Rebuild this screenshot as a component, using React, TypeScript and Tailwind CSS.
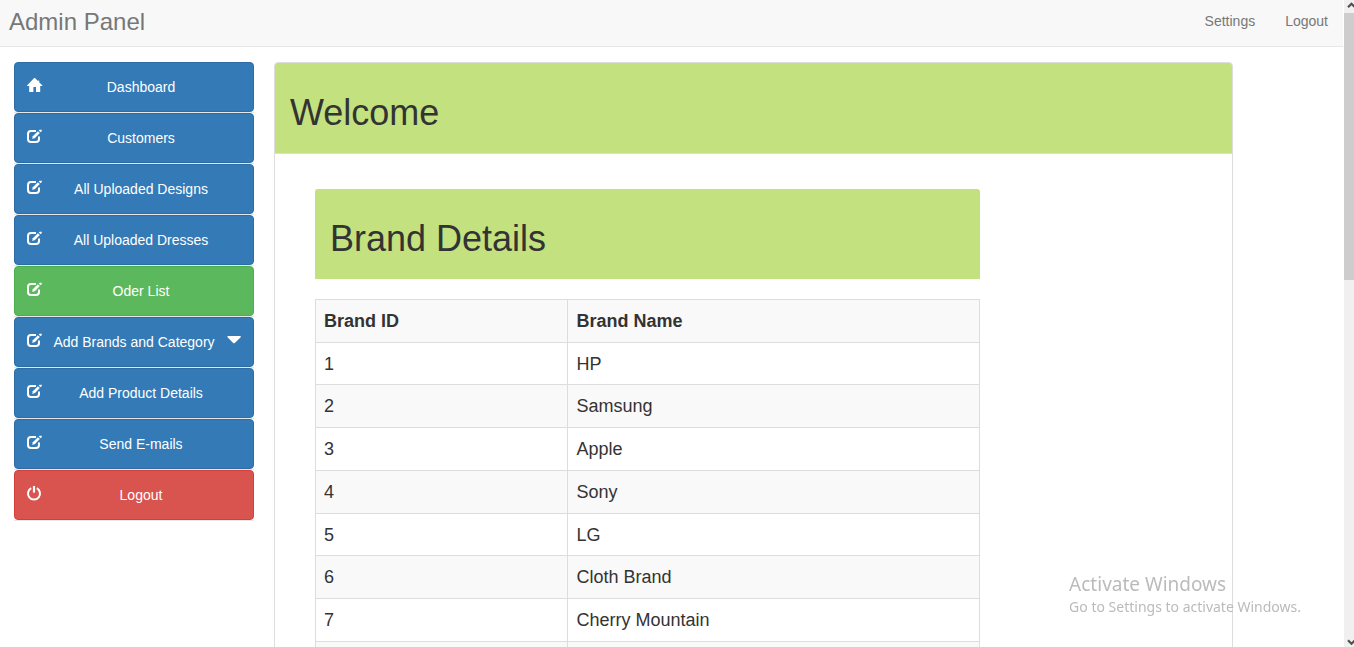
import React from "react";
import clsx from "clsx";

type IconProps = { className?: string };

function HomeIcon({ className }: IconProps) {
  return (
    <svg viewBox="0 0 14 14" className={className} fill="currentColor" aria-hidden="true">
      <path d="M7.5 0 H8 L11.2 3.2 V2.6 H12.2 V4.2 L15.4 7.4 V8 H13.2 V14 H9 V9 H6.4 V14 H2.2 V8 H0 V7.4 L7.2 0 Z" />
    </svg>
  );
}

function EditIcon({ className }: IconProps) {
  return (
    <svg viewBox="0 0 14 14" className={className} aria-hidden="true">
      <path
        d="M9 2 H4 A3 3 0 0 0 1 5 V10 A3 3 0 0 0 4 13 H9 A3 3 0 0 0 12 10 V7.4"
        fill="none"
        stroke="currentColor"
        strokeWidth="2"
      />
      <path d="M5.2 10 L5.8 7.2 L10.9 2.2 L12.8 4.1 L8 9 Z" fill="currentColor" />
      <path d="M11.8 1.5 L12.6 0.7 H14.8 V2 L13.5 3.3 Z" fill="currentColor" />
    </svg>
  );
}

function PowerIcon({ className }: IconProps) {
  return (
    <svg viewBox="0 0 14 14" className={className} fill="none" stroke="currentColor" aria-hidden="true">
      <path d="M4.2 2.2 A6 6 0 1 0 9.8 2.2" strokeWidth="2" />
      <path d="M7 0 V6.6" strokeWidth="2.2" />
    </svg>
  );
}

type Item = {
  label: string;
  icon: (props: IconProps) => React.ReactElement;
  tone: "blue" | "green" | "red";
  menu?: boolean;
};

const items: Item[] = [
  { label: "Dashboard", icon: HomeIcon, tone: "blue" },
  { label: "Customers", icon: EditIcon, tone: "blue" },
  { label: "All Uploaded Designs", icon: EditIcon, tone: "blue" },
  { label: "All Uploaded Dresses", icon: EditIcon, tone: "blue" },
  { label: "Oder List", icon: EditIcon, tone: "green" },
  { label: "Add Brands and Category", icon: EditIcon, tone: "blue", menu: true },
  { label: "Add Product Details", icon: EditIcon, tone: "blue" },
  { label: "Send E-mails", icon: EditIcon, tone: "blue" },
  { label: "Logout", icon: PowerIcon, tone: "red" },
];

const tones = {
  blue: "bg-[#337ab7] border-[#2e6da4]",
  green: "bg-[#5cb85c] border-[#4cae4c]",
  red: "bg-[#d9534f] border-[#d43f3a]",
};

const brands = ["HP", "Samsung", "Apple", "Sony", "LG", "Cloth Brand", "Cherry Mountain"];

function SidebarButton({ label, icon: Icon, tone, menu }: Item) {
  return (
    <li className="border-b border-[#e7e7e7]">
      <button
        type="button"
        aria-haspopup={menu ? "menu" : undefined}
        className={clsx(
          "flex h-[50px] w-full items-center rounded border px-3 text-sm text-white",
          tones[tone],
        )}
      >
        <Icon className="mb-1 size-3.5 shrink-0 overflow-visible" />
        <span className="flex-1 whitespace-nowrap text-center">{label}</span>
        {menu && (
          <svg viewBox="0 0 14 8" className="mb-1 h-2 w-3.5 shrink-0" fill="currentColor" aria-hidden="true">
            <path d="M0.5 0 H13.7 V1.2 L7.8 7 Q7 7.6 6.2 7 L0.5 1.2 Z" />
          </svg>
        )}
      </button>
    </li>
  );
}

function Scrollbar() {
  return (
    <div className="flex w-[10px] shrink-0 flex-col overflow-hidden bg-[#f0f0f0]" aria-hidden="true">
      <svg viewBox="0 0 10 13" className="h-[13px] w-[10px]" fill="none" stroke="#505050" strokeWidth="2.2">
        <path d="M4 7.2 L7.5 3.7 L11 7.2" />
      </svg>
      <div className="h-[267px] bg-[#cdcdcd]" />
      <svg viewBox="0 0 10 13" className="mt-auto h-[13px] w-[10px]" fill="none" stroke="#505050" strokeWidth="2.2">
        <path d="M4 6.2 L7.5 9.7 L11 6.2" />
      </svg>
    </div>
  );
}

export default function App() {
  return (
    <div className="flex h-screen overflow-hidden bg-white font-['Liberation_Sans',Arial,sans-serif] text-[#333]">
      <div className="mr-px flex min-w-0 flex-1 flex-col overflow-hidden">
        <header className="flex h-[47px] shrink-0 items-center justify-between border-b border-[#e7e7e7] bg-[#f8f8f8] pl-[9px] pr-[15px] text-[#777]">
          <a href="#" className="pb-0.5 text-2xl">
            Admin Panel
          </a>
          <nav className="flex gap-[30px] pb-1 text-sm">
            <a href="#">Settings</a>
            <a href="#">Logout</a>
          </nav>
        </header>

        <div className="flex min-h-0 flex-1 gap-5 overflow-hidden pl-3.5 pr-[110px] pt-[15px]">
          <nav className="w-60 shrink-0">
            <ul>
              {items.map((item) => (
                <SidebarButton key={item.label} {...item} />
              ))}
            </ul>
          </nav>

          <main className="h-max min-w-0 flex-1 rounded border border-[#ddd]">
            <div className="rounded-t-[3px] border-b border-[#ddd] bg-[#c4e17f] px-[15px] pb-5 pt-[30px]">
              <h1 className="text-4xl">Welcome</h1>
            </div>
            <div className="pb-5 pl-10 pr-[30px] pt-[35px]">
              <section className="w-3/4">
                <div className="mb-5 rounded-t-[3px] bg-[#c4e17f] px-[15px] pb-5 pt-[30px]">
                  <h2 className="text-4xl">Brand Details</h2>
                </div>
                <table className="w-full table-fixed border-collapse text-lg leading-[1.43]">
                  <thead>
                    <tr className="bg-[#f9f9f9] text-left">
                      <th scope="col" className="w-[38%] border border-[#ddd] px-2 pb-[7px] pt-[9px] font-bold">
                        Brand ID
                      </th>
                      <th scope="col" className="border border-[#ddd] px-2 pb-[7px] pt-[9px] font-bold">
                        Brand Name
                      </th>
                    </tr>
                  </thead>
                  <tbody>
                    {brands.map((name, i) => (
                      <tr key={name} className="even:bg-[#f9f9f9]">
                        <td className="border border-[#ddd] px-2 pb-[7px] pt-[9px]">{i + 1}</td>
                        <td className="border border-[#ddd] px-2 pb-[7px] pt-[9px]">{name}</td>
                      </tr>
                    ))}
                    <tr className="h-[43px] even:bg-[#f9f9f9]">
                      <td className="border border-[#ddd]" />
                      <td className="border border-[#ddd]" />
                    </tr>
                  </tbody>
                </table>
              </section>
            </div>
          </main>
        </div>
      </div>

      <Scrollbar />

      <div className="pointer-events-none fixed bottom-[30px] right-[53px] font-['Noto_Sans','Open_Sans',sans-serif] text-[#bbb]">
        <p className="text-[19px] leading-[26px]">Activate Windows</p>
        <p className="text-sm leading-5">Go to Settings to activate Windows.</p>
      </div>
    </div>
  );
}
